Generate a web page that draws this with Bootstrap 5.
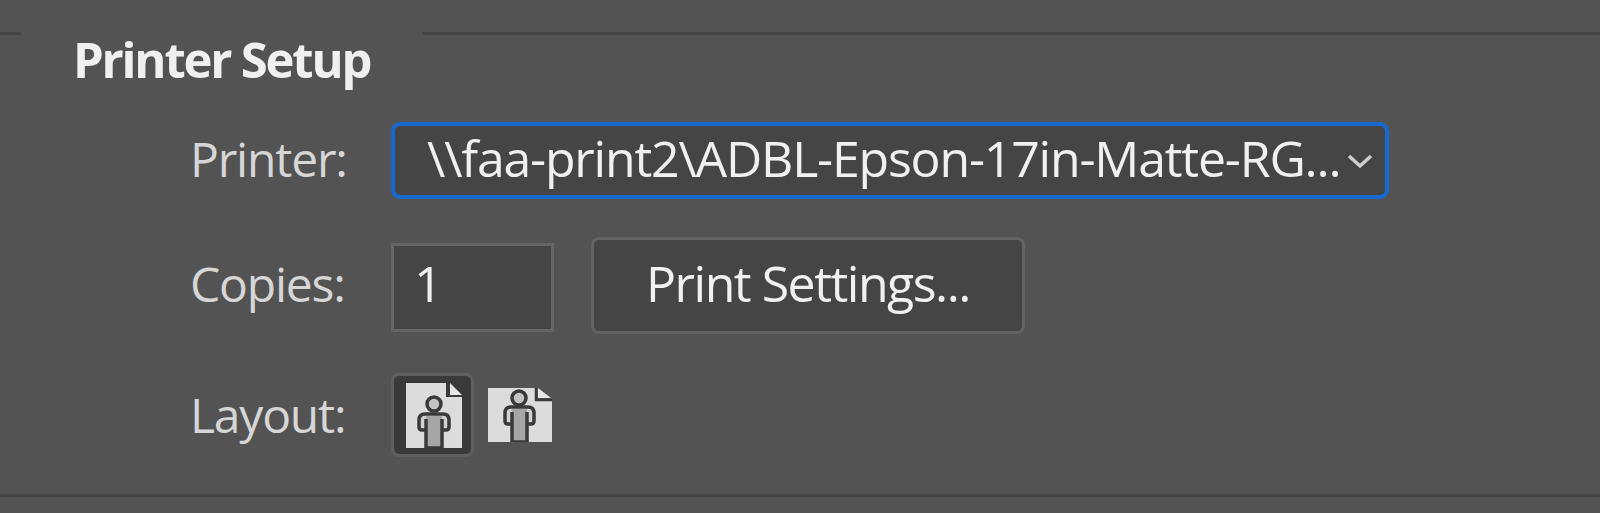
<!DOCTYPE html>
<html lang="en">
<head>
<meta charset="utf-8">
<title>Printer Setup</title>
<link href="https://cdn.jsdelivr.net/npm/bootstrap@5.3.0/dist/css/bootstrap.min.css" rel="stylesheet">
<style>
html,body{height:513px;overflow:hidden}
body{background:#535353;color:#dcdcdc;font-family:"Open Sans","Noto Sans","Liberation Sans",sans-serif}
.panel-frame{height:513px;padding-top:32px}
.rule-top{height:3px}
.rule-seg{background:#444;height:3px}
.rule-a{width:21px}
.rule-gapper{width:401px}
.panel-title{font-size:49px;font-weight:700;line-height:48px;letter-spacing:-2.2px;color:#f0f0f0;margin:0;padding:0 0 0 73px;height:60px}
.form-area{padding-left:190px;margin-top:27px}
.form-row{display:flex;align-items:center}
.row-label{width:201px;font-size:48px;letter-spacing:-1.2px;color:#d6d6d6;line-height:60px;padding-bottom:4px}
.row-layout .row-label{padding-bottom:0}
.select-box{width:998px;height:77px;border:4px solid #1769d2;border-radius:9px;background:#454545;display:flex;align-items:center;padding:0 12px 0 32px;font-size:50px;letter-spacing:-1.2px;color:#f0f0f0;white-space:nowrap}
.select-text{flex:1;overflow:hidden;padding-bottom:4px}
.copies-box{width:163px;height:89px;margin-top:4px;border:3px solid #656565;background:#454545;color:#f0f0f0;font-size:50px;padding:0 0 8px 20px;display:flex;align-items:center}
.settings-btn{width:434px;height:97px;border:3px solid #636363;border-radius:8px;background:#454545;color:#f0f0f0;font-size:50px;letter-spacing:-1.5px;margin-left:37px;padding:0 0 4px}
.row-copies{margin-top:38px}
.row-layout{margin-top:39px}
.icon-on{width:83px;height:84px;background:#3a3a3a;border:3px solid #5f5f5f;border-radius:8px;display:flex;align-items:center;justify-content:center;padding-left:3px}
.icon-off{margin-left:14px}
.rule-bottom{height:3px;background:#444;margin-top:37px}
</style>
</head>
<body>
<div class="panel-frame d-flex flex-column">
  <div class="rule-top d-flex">
    <div class="rule-seg rule-a"></div>
    <div class="rule-gapper"></div>
    <div class="rule-seg flex-grow-1"></div>
  </div>
  <h1 class="panel-title">Printer Setup</h1>
  <div class="form-area">
    <div class="form-row">
      <div class="row-label">Printer:</div>
      <div class="select-box"><span class="select-text">\\faa-print2\ADBL-Epson-17in-Matte-RG...</span>
        <svg width="26" height="16" viewBox="0 0 26 16"><path d="M2 3l11 10L24 3" fill="none" stroke="#cfcfcf" stroke-width="3.4"/></svg>
      </div>
    </div>
    <div class="form-row row-copies">
      <div class="row-label">Copies:</div>
      <div class="copies-box">1</div>
      <button type="button" class="btn settings-btn">Print Settings...</button>
    </div>
    <div class="form-row row-layout">
      <div class="row-label">Layout:</div>
      <div class="icon-on">
        <svg width="56" height="65" viewBox="0 0 56 65">
          <path d="M0 0H40V14H56V65H0Z" fill="#dcdcdc"/>
          <path d="M44 0L56 12H44Z" fill="#e6e6e6"/>
          <circle cx="28" cy="21" r="7" fill="#c4c4c4" stroke="#3a3a3a" stroke-width="3.5"/>
          <path d="M20 47h-4q-3 0-3-3V37q0-6 6-6h18q6 0 6 6v7q0 3-3 3h-4" fill="#d2d2d2" stroke="#3a3a3a" stroke-width="3.5"/>
          <path d="M20 33h16v32H20Z" fill="#a6a6a6"/>
          <path d="M20 36V65H36V36" fill="none" stroke="#3a3a3a" stroke-width="3.5"/>
        </svg>
      </div>
      <svg class="icon-off" width="64" height="54" viewBox="0 0 64 54">
        <path d="M0 0H47V12H64V54H0Z" fill="#dcdcdc"/>
        <path d="M50 0L63 10H50Z" fill="#e6e6e6"/>
        <path d="M48 0V12H64" fill="none" stroke="#3a3a3a" stroke-width="2.5"/>
        <circle cx="31" cy="10" r="7" fill="#c4c4c4" stroke="#3a3a3a" stroke-width="3.5"/>
        <path d="M24 36h-4q-3 0-3-3V25q0-6 6-6h17q6 0 6 6v8q0 3-3 3h-4" fill="#d2d2d2" stroke="#3a3a3a" stroke-width="3.5"/>
        <path d="M24 21h15v33H24Z" fill="#a6a6a6"/>
        <path d="M24 24V54H39V24" fill="none" stroke="#3a3a3a" stroke-width="3.5"/>
      </svg>
    </div>
  </div>
  <div class="rule-bottom"></div>
</div>
</body>
</html>
